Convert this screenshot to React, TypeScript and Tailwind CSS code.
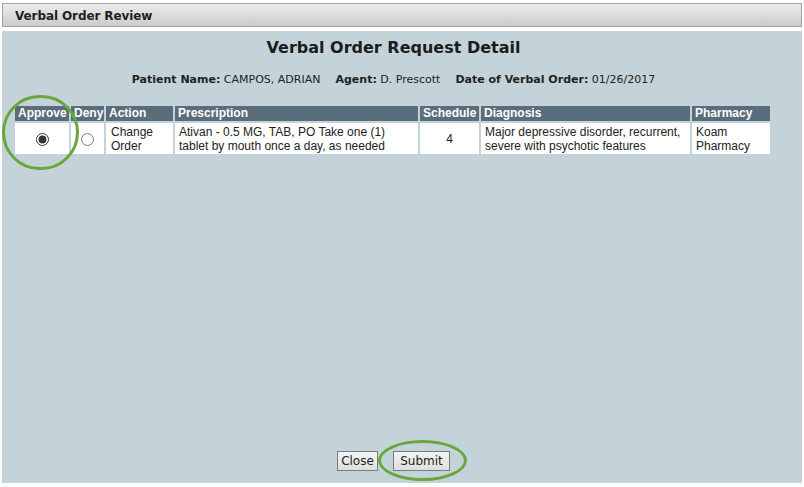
import React, { useState } from "react";

const th = "bg-[#5a6d7a] text-white font-bold text-left px-[3px] py-0 h-[15px] leading-[15px] align-middle overflow-hidden whitespace-nowrap";
const td = "bg-white px-[4px] py-[1px] align-middle text-[12px] leading-[14px] text-[#222]";

const App = () => {
  const [choice, setChoice] = useState("approve");

  return (
    <div className="relative w-[804px] h-[487px] bg-white overflow-hidden font-['DejaVu_Sans',Verdana,sans-serif]">
      <div className="pt-[3px] pl-[2px] pr-[2px]">
        <div className="h-[24px] border border-[#a3a3a3] bg-gradient-to-b from-[#ececec] to-[#cbcbcb] pl-[12px] flex items-center">
          <span className="text-[12px] font-bold text-[#222] tracking-[-0.1px] mt-[1px]">Verbal Order Review</span>
        </div>
      </div>

      <div className="mt-[4px] mx-[2px] h-[452px] bg-[#c3d3d9] flex flex-col pr-[17px]">
        <h1 className="text-center text-[16px] font-bold text-[#1c1c1c] mt-[7px] leading-[20px]">
          Verbal Order Request Detail
        </h1>

        <div className="text-center text-[11px] text-[#222] mt-[15px] leading-[14px]">
          <b>Patient Name:</b> CAMPOS, ADRIAN
          <span className="inline-block w-[15px]" />
          <b>Agent:</b> D. Prescott
          <span className="inline-block w-[15px]" />
          <b>Date of Verbal Order:</b> 01/26/2017
        </div>

        <table className="table-fixed ml-[11px] mt-[17px] border-separate border-spacing-[2px] text-[12px] font-['Liberation_Sans',Arial,sans-serif] w-[759px]">
          <thead>
            <tr>
              <th className={`${th} w-[54px]`}>Approve</th>
              <th className={`${th} w-[33px]`}>Deny</th>
              <th className={`${th} w-[67px]`}>Action</th>
              <th className={`${th} w-[243px]`}>Prescription</th>
              <th className={`${th} w-[59px]`}>Schedule</th>
              <th className={`${th} w-[209px]`}>Diagnosis</th>
              <th className={th}>Pharmacy</th>
            </tr>
          </thead>
          <tbody>
            <tr className="h-[31px]">
              <td className={`${td} text-center`}>
                <input
                  type="radio"
                  name="vo"
                  checked={choice === "approve"}
                  onChange={() => setChoice("approve")}
                  className="w-[13px] h-[13px] mt-[4px] accent-[#333]"
                />
              </td>
              <td className={`${td} text-center`}>
                <input
                  type="radio"
                  name="vo"
                  checked={choice === "deny"}
                  onChange={() => setChoice("deny")}
                  className="w-[13px] h-[13px] mt-[4px]"
                />
              </td>
              <td className={`${td} pl-[5px]`}>Change<br />Order</td>
              <td className={td}>Ativan - 0.5 MG, TAB, PO Take one (1)<br />tablet by mouth once a day, as needed</td>
              <td className={`${td} text-center`}>4</td>
              <td className={td}>Major depressive disorder, recurrent,<br />severe with psychotic features</td>
              <td className={td}>Koam<br />Pharmacy</td>
            </tr>
          </tbody>
        </table>

        <div className="mt-auto mb-[12px] flex justify-center gap-[15px]">
          <button className="h-[20px] w-[41px] border border-[#7a7a7a] bg-gradient-to-b from-[#f4f4f4] to-[#dedede] text-[12px] text-[#222] leading-[18px]">
            Close
          </button>
          <button className="h-[20px] w-[57px] border border-[#7a7a7a] bg-gradient-to-b from-[#f4f4f4] to-[#dedede] text-[12px] text-[#222] leading-[18px]">
            Submit
          </button>
        </div>
      </div>

      {/* highlight rings */}
      <div className="absolute left-[2px] top-[95px] w-[77px] h-[75px] rounded-full border-[3px] border-[#6aa63a]" />
      <div className="absolute left-[378px] top-[440px] w-[89px] h-[41px] rounded-[50%] border-[3px] border-[#6aa63a]" />
    </div>
  );
};

export default App;
